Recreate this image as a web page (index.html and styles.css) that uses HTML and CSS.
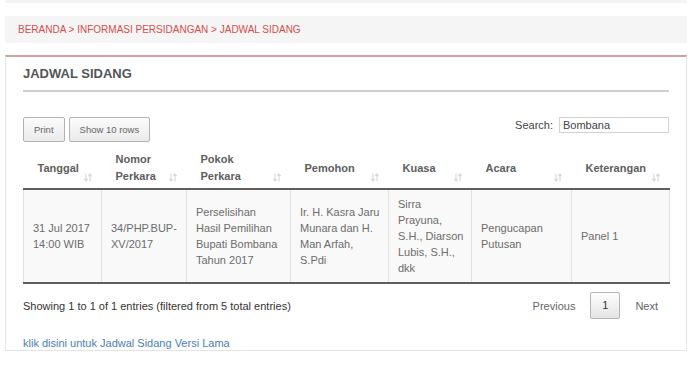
FILE: index.html
```html
<!DOCTYPE html>
<html>
<head>
    <title>Jadwal Sidang</title>
    <link rel="stylesheet" href="styles.css">
</head>
<body>
    <div class="page">
        <div class="top-strip"></div>
        <div class="breadcrumb">BERANDA &gt; INFORMASI PERSIDANGAN &gt; JADWAL SIDANG</div>

        <div class="panel">
            <h2 class="panel-title">JADWAL SIDANG</h2>

            <div class="toolbar">
                <div class="buttons">
                    <button class="btn">Print</button>
                    <button class="btn">Show 10 rows</button>
                </div>
                <label class="search">Search: <input type="text" value="Bombana"></label>
            </div>

            <table class="schedule">
                <colgroup>
                    <col class="c-date">
                    <col class="c-no">
                    <col class="c-topic">
                    <col class="c-applicant">
                    <col class="c-counsel">
                    <col class="c-event">
                    <col class="c-note">
                </colgroup>
                <thead>
                    <tr>
                        <th>Tanggal</th>
                        <th>Nomor Perkara</th>
                        <th>Pokok Perkara</th>
                        <th>Pemohon</th>
                        <th>Kuasa</th>
                        <th>Acara</th>
                        <th>Keterangan</th>
                    </tr>
                </thead>
                <tbody>
                    <tr>
                        <td>31 Jul 2017 14:00 WIB</td>
                        <td>34/PHP.BUP-XV/2017</td>
                        <td class="topic">Perselisihan Hasil Pemilihan Bupati Bombana Tahun 2017</td>
                        <td>Ir. H. Kasra Jaru Munara dan H. Man Arfah, S.Pdi</td>
                        <td>Sirra Prayuna, S.H., Diarson Lubis, S.H., dkk</td>
                        <td>Pengucapan Putusan</td>
                        <td>Panel 1</td>
                    </tr>
                </tbody>
            </table>

            <div class="table-footer">
                <div class="info">Showing 1 to 1 of 1 entries (filtered from 5 total entries)</div>
                <div class="paginate">
                    <span class="page-link">Previous</span>
                    <span class="page-current">1</span>
                    <span class="page-link">Next</span>
                </div>
            </div>

            <a class="old-link" href="#">klik disini untuk Jadwal Sidang Versi Lama</a>
        </div>
    </div>

    <script>
        // sort markers for the header cells
        var icon = '<svg class="sort" width="8" height="9" viewBox="0 0 8 9">' +
            '<path d="M2 0.5V8M0.3 5.8L2 8L3.7 5.8M6 8.5V1M4.3 3.2L6 1L7.7 3.2" fill="none" stroke="#d8d8d8" stroke-width="1.1"/></svg>';
        document.querySelectorAll('.schedule th').forEach(function (th) {
            th.insertAdjacentHTML('beforeend', icon);
        });
    </script>
</body>
</html>
```

FILE: styles.css
```css
body {
    margin: 0;
    font-family: "Liberation Sans", Arial, sans-serif;
    font-size: 11px;
    color: #333;
    background: #fff;
}
.page {
    margin: 0 9px 0 5px;
}
.top-strip {
    height: 3px;
    background: #f3f3f3;
}
.breadcrumb {
    margin-top: 13px;
    height: 27px;
    line-height: 27px;
    padding-left: 13px;
    background: #f5f5f5;
    color: #d64d4d;
    font-size: 10px;
}
.panel {
    margin-top: 12px;
    border: 1px solid #e4e4e4;
    border-top: 2px solid #d3a0a0;
    padding: 0 17px;
}
.panel-title {
    margin: 0;
    padding: 9px 0 8px;
    line-height: 16px;
    font-size: 13px;
    color: #555;
    border-bottom: 2px solid #cfcfcf;
}
.toolbar {
    display: flex;
    justify-content: space-between;
    align-items: flex-start;
    margin-top: 25px;
    margin-bottom: 6px;
}
.buttons {
    display: flex;
    gap: 4px;
}
.btn {
    height: 25px;
    padding: 0 10px;
    font-family: inherit;
    font-size: 9.5px;
    color: #666;
    background: linear-gradient(#fbfbfb, #ebebeb);
    border: 1px solid #b3b3b3;
    border-radius: 2px;
}
.search {
    display: flex;
    align-items: center;
    gap: 6px;
    color: #444;
}
.search input {
    width: 110px;
    height: 16px;
    box-sizing: border-box;
    margin: 0;
    padding: 0 3px;
    border: 1px solid #d3d3d3;
    font-family: inherit;
    font-size: 11px;
    color: #444;
}
.schedule {
    width: 646px;
    table-layout: fixed;
    border-collapse: collapse;
}
.c-date { width: 78px; }
.c-no { width: 85px; }
.c-topic { width: 104px; }
.c-applicant { width: 98px; }
.c-counsel { width: 83px; }
.c-event { width: 100px; }
.c-note { width: 98px; }
.schedule th {
    position: relative;
    height: 40px;
    padding: 0 18px 0 14px;
    text-align: left;
    line-height: 17px;
    font-weight: bold;
    color: #5e5e5e;
    border-bottom: 2px solid #5f5f5f;
}
.schedule th .sort {
    position: absolute;
    right: 10px;
    bottom: 6px;
}
.schedule td {
    padding: 6px 6px 6px 9px;
    line-height: 16px;
    color: #6c6c6c;
    background: #f9f9f9;
    border-left: 1px solid #e2e2e2;
    border-right: 1px solid #e2e2e2;
    border-bottom: 2px solid #5f5f5f;
    vertical-align: middle;
}
.schedule td.topic {
    padding-right: 10px;
}
.table-footer {
    display: flex;
    justify-content: space-between;
    align-items: center;
    margin-top: 8px;
}
.info {
    color: #333;
}
.paginate {
    display: flex;
    align-items: center;
    gap: 15px;
    padding-right: 11px;
}
.page-link {
    color: #666;
}
.page-current {
    width: 28px;
    height: 25px;
    line-height: 25px;
    text-align: center;
    color: #333;
    background: linear-gradient(#fefefe, #e4e4e4);
    border: 1px solid #b5b5b5;
    border-radius: 2px;
}
.old-link {
    display: block;
    margin-top: 17px;
    line-height: 14px;
    color: #4a7eb4;
    text-decoration: none;
}
```
